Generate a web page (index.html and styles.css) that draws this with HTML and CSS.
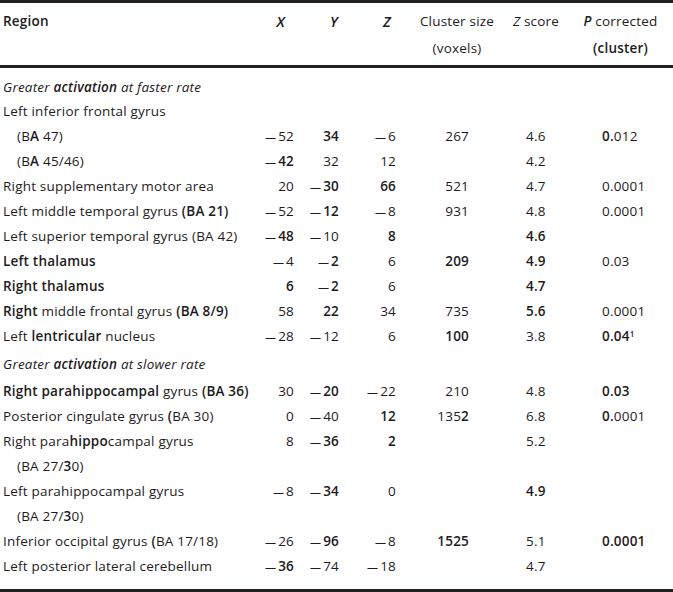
FILE: index.html
```html
<!DOCTYPE html>
<html>
<head>
<meta charset="utf-8">
<link rel="stylesheet" href="styles.css">
</head>
<body>
<div class="wrap">
<table class="tbl">
  <colgroup>
    <col class="c-region"><col class="c-x"><col class="c-y"><col class="c-z"><col class="c-cl"><col class="c-zs"><col class="c-p">
  </colgroup>
  <thead>
    <tr>
      <th class="h-region"><b>Region</b></th>
      <th class="h-x"><i class="axis">X</i></th>
      <th class="h-y"><i class="axis">Y</i></th>
      <th class="h-z"><i class="axis">Z</i></th>
      <th class="h-cl">Cluster size<br>(voxels)</th>
      <th class="h-zs"><i class="light">Z</i> score</th>
      <th class="h-p"><b><i>P</i></b> corrected<br><b>(cluster)</b></th>
    </tr>
  </thead>
  <tbody>
    <tr class="sec first"><td colspan="7"><i>Greater <b>activation</b> at faster rate</i></td></tr>
    <tr><td class="reg">Left inferior frontal gyrus</td><td></td><td></td><td></td><td></td><td></td><td></td></tr>
    <tr><td class="reg ind">(B<b>A</b> 47)</td><td class="x"><span class="m">—</span>52</td><td class="y"><b>34</b></td><td class="z"><span class="m">—</span>6</td><td class="cl">267</td><td class="zs">4.6</td><td class="p"><b>0.</b>012</td></tr>
    <tr><td class="reg ind">(B<b>A</b> 45/46)</td><td class="x"><b><span class="m">—</span>42</b></td><td class="y">32</td><td class="z">12</td><td class="cl"></td><td class="zs">4.2</td><td class="p"></td></tr>
    <tr><td class="reg">Right supplementary motor area</td><td class="x">20</td><td class="y"><b><span class="m">—</span>30</b></td><td class="z"><b>66</b></td><td class="cl">521</td><td class="zs">4.7</td><td class="p">0.0001</td></tr>
    <tr><td class="reg">Left middle temporal gyrus <b>(BA 21)</b></td><td class="x"><span class="m">—</span>52</td><td class="y"><b><span class="m">—</span>12</b></td><td class="z"><span class="m">—</span>8</td><td class="cl">931</td><td class="zs">4.8</td><td class="p">0.0001</td></tr>
    <tr><td class="reg">Left superior temporal gyrus (BA 42)</td><td class="x"><b><span class="m">—</span>48</b></td><td class="y"><span class="m">—</span>10</td><td class="z"><b>8</b></td><td class="cl"></td><td class="zs"><b>4.6</b></td><td class="p"></td></tr>
    <tr><td class="reg"><b>Left thalamus</b></td><td class="x"><span class="m">—</span>4</td><td class="y"><b><span class="m">—</span>2</b></td><td class="z">6</td><td class="cl"><b>209</b></td><td class="zs"><b>4.9</b></td><td class="p">0.03</td></tr>
    <tr><td class="reg"><b>Right thalamus</b></td><td class="x"><b>6</b></td><td class="y"><b><span class="m">—</span>2</b></td><td class="z">6</td><td class="cl"></td><td class="zs"><b>4.7</b></td><td class="p"></td></tr>
    <tr><td class="reg"><b>Right</b> middle frontal gyrus <b>(BA 8/9)</b></td><td class="x">58</td><td class="y"><b>22</b></td><td class="z">34</td><td class="cl">735</td><td class="zs"><b>5.6</b></td><td class="p">0.0001</td></tr>
    <tr><td class="reg">Left <b>lentricular</b> nucleus</td><td class="x"><span class="m">—</span>28</td><td class="y"><span class="m">—</span>12</td><td class="z">6</td><td class="cl"><b>100</b></td><td class="zs">3.8</td><td class="p"><b>0.04<sup>1</sup></b></td></tr>
    <tr class="sec"><td colspan="7"><i>Greater <b>activation</b> at slower rate</i></td></tr>
    <tr><td class="reg"><b>Right parahippocampal</b> gyrus <b>(BA 36)</b></td><td class="x">30</td><td class="y"><b><span class="m">—</span>20</b></td><td class="z"><span class="m">—</span>22</td><td class="cl">210</td><td class="zs">4.8</td><td class="p"><b>0.03</b></td></tr>
    <tr><td class="reg">Posterior cingulate gyrus <b>(</b>BA 30)</td><td class="x">0</td><td class="y"><span class="m">—</span>40</td><td class="z"><b>12</b></td><td class="cl">135<b>2</b></td><td class="zs">6.8</td><td class="p"><b>0.</b>0001</td></tr>
    <tr><td class="reg">Right para<b>hippo</b>campal gyrus</td><td class="x">8</td><td class="y"><b><span class="m">—</span>36</b></td><td class="z"><b>2</b></td><td class="cl"></td><td class="zs">5.2</td><td class="p"></td></tr>
    <tr><td class="reg ind">(BA 27/<b>3</b>0)</td><td></td><td></td><td></td><td></td><td></td><td></td></tr>
    <tr><td class="reg">Left parahippocampal gyrus</td><td class="x"><span class="m">—</span>8</td><td class="y"><b><span class="m">—</span>34</b></td><td class="z">0</td><td class="cl"></td><td class="zs"><b>4.9</b></td><td class="p"></td></tr>
    <tr><td class="reg ind">(BA 27/<b>3</b>0)</td><td></td><td></td><td></td><td></td><td></td><td></td></tr>
    <tr><td class="reg">Inferior occipital gyrus <b>(</b>BA 17/18)</td><td class="x"><span class="m">—</span>26</td><td class="y"><b><span class="m">—</span>96</b></td><td class="z"><span class="m">—</span>8</td><td class="cl"><b>1525</b></td><td class="zs">5.1</td><td class="p"><b>0.0001</b></td></tr>
    <tr class="last"><td class="reg">Left posterior lateral cerebellum</td><td class="x"><b><span class="m">—</span>36</b></td><td class="y"><span class="m">—</span>74</td><td class="z"><span class="m">—</span>18</td><td class="cl"></td><td class="zs">4.7</td><td class="p"></td></tr>
  </tbody>
</table>
</div>
</body>
</html>
```

FILE: styles.css
```css
html, body {
  margin: 0;
  padding: 0;
  background: #ffffff;
}

.wrap {
  width: 673px;
  height: 592px;
  border-top: 3px solid #231f20;
  border-bottom: 3px solid #231f20;
  box-sizing: border-box;
  overflow: hidden;
}

.tbl {
  width: 673px;
  border-collapse: separate;
  border-spacing: 0;
  table-layout: fixed;
  font-family: "Open Sans", Lato, "Liberation Sans", sans-serif;
  font-size: 13.5px;
  font-weight: 500;
  letter-spacing: 0.2px;
  color: #1e1b1c;
}

.tbl b { font-weight: 600; }

.c-region { width: 258px; }
.c-x { width: 42px; }
.c-y { width: 45px; }
.c-z { width: 65px; }
.c-cl { width: 94px; }
.c-zs { width: 64px; }
.c-p { width: 105px; }

.tbl th {
  font-weight: 500;
  line-height: 27px;
  padding: 5px 0 3px 0;
  vertical-align: top;
  border-bottom: 3px solid #231f20;
  white-space: nowrap;
}

.h-region { text-align: left; padding-left: 3px !important; }
.h-x { text-align: right; padding-right: 15px !important; }
.h-y { text-align: right; padding-right: 7px !important; }
.h-z { text-align: right; padding-right: 19px !important; }
.h-cl { text-align: center; }
.h-zs { text-align: center; }
.h-p { text-align: center; }

.axis {
  font-weight: 600;
  font-size: 14.5px;
}

.light { font-weight: 400; }

.m {
  font-size: 11px;
  font-weight: 400;
  margin-right: 2px;
}

.tbl td {
  height: 25px;
  line-height: 25px;
  padding: 0;
  white-space: nowrap;
  vertical-align: middle;
}

.sec td {
  height: 30px;
  line-height: 25px;
  padding: 3px 0 2px 3px;
  box-sizing: border-box;
}

.sec.first td {
  height: 31px;
  padding: 7px 0 0 3px;
  line-height: 24px;
}

.last td {
  height: 35px;
  padding-bottom: 10px;
  box-sizing: border-box;
}

.reg { padding-left: 3px !important; }
.ind { padding-left: 17px !important; }

.x { text-align: right; padding-right: 6px !important; }
.y { text-align: right; padding-right: 6px !important; }
.z { text-align: right; padding-right: 14px !important; }
.cl { text-align: right; padding-right: 35px !important; }
.zs { text-align: left; padding-left: 22px !important; }
.p { text-align: left; padding-left: 34px !important; }

sup {
  font-size: 8px;
  line-height: 0;
  vertical-align: 4px;
}
```
